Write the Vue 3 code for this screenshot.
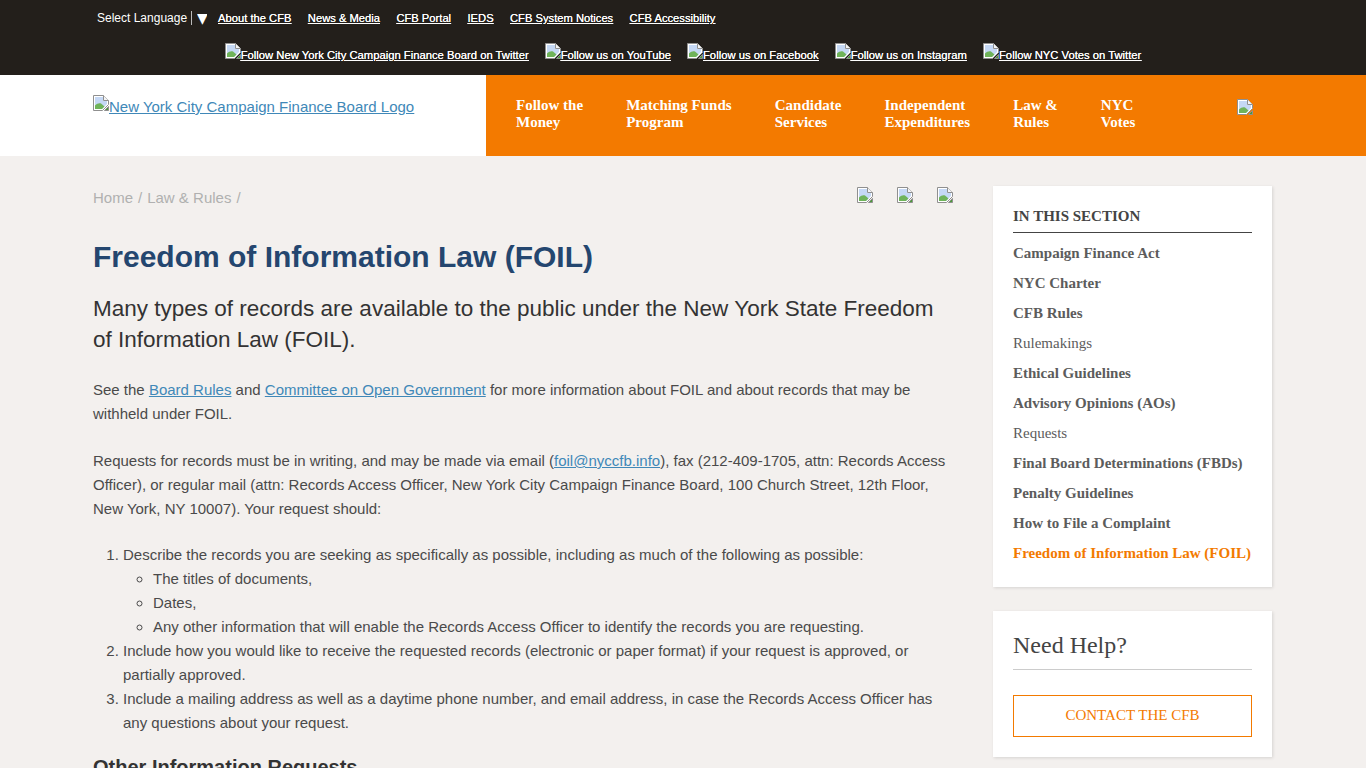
<script setup>
const topLinks = ['About the CFB', 'News & Media', 'CFB Portal', 'IEDS', 'CFB System Notices', 'CFB Accessibility']
const socials = [
  'Follow New York City Campaign Finance Board on Twitter',
  'Follow us on YouTube',
  'Follow us on Facebook',
  'Follow us on Instagram',
  'Follow NYC Votes on Twitter'
]
const navItems = [
  ['Follow the', 'Money'],
  ['Matching Funds', 'Program'],
  ['Candidate', 'Services'],
  ['Independent', 'Expenditures'],
  ['Law &', 'Rules'],
  ['NYC', 'Votes']
]
const sideItems = [
  { t: 'Campaign Finance Act', b: true },
  { t: 'NYC Charter', b: true },
  { t: 'CFB Rules', b: true },
  { t: 'Rulemakings', b: false },
  { t: 'Ethical Guidelines', b: true },
  { t: 'Advisory Opinions (AOs)', b: true },
  { t: 'Requests', b: false },
  { t: 'Final Board Determinations (FBDs)', b: true },
  { t: 'Penalty Guidelines', b: true },
  { t: 'How to File a Complaint', b: true },
  { t: 'Freedom of Information Law (FOIL)', b: true, active: true }
]
</script>

<template>
  <div class="page">
    <svg class="defs" width="0" height="0" aria-hidden="true">
      <symbol id="broken" viewBox="0 0 16 16">
        <path d="M.5.5H10.5L15.5 5.5V9.5L9.5 15.5H.5Z" fill="#fff" stroke="#8f8f8f" />
        <path d="M2 2H10V6H14V9L9 14H2Z" fill="#c5d8f5" />
        <path d="M10.5.5V5.5H15.5" fill="#f4f4f4" stroke="#8f8f8f" />
        <path d="M2 14V10.5C4 8.5 6 8 8 8.5L11.5 11.5L9 14Z" fill="#6fb35a" />
        <path d="M15.5 11.5V15.5H11.5Z" fill="#4c9a3a" stroke="#8f8f8f" />
      </symbol>
    </svg>

    <div class="topbar">
      <div class="toprow">
        <span class="lang">Select Language</span>
        <span class="caret">▼</span>
        <a v-for="l in topLinks" :key="l" class="toplink" href="#">{{ l }}</a>
      </div>
      <div class="socialrow">
        <a v-for="s in socials" :key="s" class="social" href="#">
          <svg class="bk bk-social"><use href="#broken" /></svg><span class="u">{{ s }}</span>
        </a>
      </div>
    </div>

    <header class="header">
      <div class="logo">
        <a href="#" class="logolink">
          <svg class="bk bk-logo"><use href="#broken" /></svg><span class="u">New York City Campaign Finance Board Logo</span>
        </a>
      </div>
      <nav class="nav">
        <a v-for="n in navItems" :key="n[0]" class="navitem" href="#">{{ n[0] }}<br />{{ n[1] }}</a>
        <svg class="bk nav-search"><use href="#broken" /></svg>
      </nav>
    </header>

    <div class="content">
      <main class="main">
        <div class="crumbrow">
          <div class="crumbs"><span>Home</span><span>/</span><span>Law &amp; Rules</span><span>/</span></div>
          <div class="share">
            <svg class="bk"><use href="#broken" /></svg>
            <svg class="bk"><use href="#broken" /></svg>
            <svg class="bk"><use href="#broken" /></svg>
          </div>
        </div>
        <h1 class="title">Freedom of Information Law (FOIL)</h1>
        <p class="lead">Many types of records are available to the public under the New York State Freedom of Information Law (FOIL).</p>
        <p class="para">See the <a href="#">Board Rules</a> and <a href="#">Committee on Open Government</a> for more information about FOIL and about records that may be withheld under FOIL.</p>
        <p class="para">Requests for records must be in writing, and may be made via email (<a href="#">foil@nyccfb.info</a>), fax (212-409-1705, attn: Records Access Officer), or regular mail (attn: Records Access Officer, New York City Campaign Finance Board, 100 Church Street, 12th Floor, New York, NY 10007). Your request should:</p>
        <ol class="olist">
          <li>Describe the records you are seeking as specifically as possible, including as much of the following as possible:
            <ul class="ulist">
              <li>The titles of documents,</li>
              <li>Dates,</li>
              <li>Any other information that will enable the Records Access Officer to identify the records you are requesting.</li>
            </ul>
          </li>
          <li>Include how you would like to receive the requested records (electronic or paper format) if your request is approved, or partially approved.</li>
          <li>Include a mailing address as well as a daytime phone number, and email address, in case the Records Access Officer has any questions about your request.</li>
        </ol>
        <h2 class="subhead">Other Information Requests</h2>
      </main>

      <aside class="side">
        <section class="card card-menu">
          <div class="sidetitle">IN THIS SECTION</div>
          <a
            v-for="i in sideItems"
            :key="i.t"
            href="#"
            class="sideitem"
            :class="{ bold: i.b, active: i.active }"
          >{{ i.t }}</a>
        </section>
        <section class="card card-help">
          <div class="helptitle">Need Help?</div>
          <a href="#" class="helpbtn">CONTACT THE CFB</a>
        </section>
      </aside>
    </div>
  </div>
</template>

<style>
html, body { margin: 0; height: 768px; overflow: hidden; }
</style>

<style scoped>
.page {
  height: 768px;
  overflow: hidden;
  background: #f3f0ee;
  font-family: "Liberation Sans", Arial, sans-serif;
  color: #444;
}
.defs { position: absolute; }
.bk { width: 16px; height: 16px; display: inline-block; flex: none; }
a { color: #4088b8; }
.u { text-decoration: underline; }

.topbar { height: 75px; background: #231f1b; color: #fff; box-sizing: border-box; }
.toprow {
  height: 36px;
  padding-left: 97px;
  display: flex;
  align-items: center;
  font-size: 11.2px;
}
.lang { font-size: 12px; padding-right: 4px; border-right: 1px solid #bbb; line-height: 14px; }
.caret { font-size: 14px; margin: 0 11px 0 5px; line-height: 14px; font-family: "DejaVu Sans", sans-serif; width: 10px; overflow: hidden; }
.toplink { color: #fff; margin-right: 16.4px; text-decoration: underline; font-size: 11.2px; text-shadow: 0 0 .5px #fff; }
.socialrow {
  display: flex;
  justify-content: center;
  gap: 16px;
  height: 39px;
  padding-top: 7px;
  box-sizing: border-box;
}
.social { color: #fff; font-size: 11.26px; line-height: 16px; display: flex; align-items: flex-end; height: 20px; text-shadow: 0 0 .5px #fff; }
.bk-social { align-self: flex-start; }

.header { display: flex; height: 81px; }
.logo { width: 486px; box-sizing: border-box; background: #fff; padding: 20px 0 0 93px; }
.logolink { display: flex; align-items: flex-end; font-size: 15px; line-height: 17px; height: 20px; }
.bk-logo { align-self: flex-start; }
.nav {
  flex: 1;
  background: #f37a00;
  display: flex;
  align-items: flex-start;
  padding: 22px 0 0 30px;
  gap: 43.1px;
}
.navitem {
  color: #fff;
  font-family: "Liberation Serif", "Times New Roman", serif;
  font-weight: 700;
  font-size: 15px;
  line-height: 17px;
  text-decoration: none;
}
.nav-search { margin-left: auto; margin-right: 113px; margin-top: 2px; }

.content { display: flex; padding: 30px 94px 0 93px; gap: 40px; }
.main { width: 860px; flex: none; }
.crumbrow { display: flex; justify-content: space-between; height: 24px; align-items: flex-start; }
.crumbs { display: flex; gap: 5px; color: #b0b0b0; font-size: 15px; line-height: 24px; }
.share { display: flex; gap: 24px; }
.share .bk { margin-top: 1px; }
.title {
  margin: 28px 0 0;
  font-size: 30px;
  line-height: 38px;
  font-weight: 700;
  color: #24466f;
}
.lead { margin: 17px 0 0; font-size: 22.5px; line-height: 31px; color: #333; }
.para { margin: 23px 0 0; font-size: 15px; line-height: 24px; color: #4a4a4a; }
.olist { margin: 22px 0 0; padding: 0 0 0 30px; font-size: 15px; line-height: 24px; color: #4a4a4a; }
.ulist { margin: 0; padding: 0 0 0 30px; list-style: circle; }
.subhead { margin: 20px 0 0; font-size: 20px; line-height: 24px; font-weight: 700; color: #333; }

.side { width: 279px; flex: none; display: flex; flex-direction: column; gap: 24px; font-family: "Liberation Serif", "Times New Roman", serif; }
.card { background: #fff; box-shadow: 1px 1px 3px rgba(0,0,0,.12); box-sizing: border-box; padding: 0 20px; }
.card-menu { height: 401px; padding-top: 21px; }
.sidetitle { font-size: 15px; line-height: 18px; font-weight: 700; color: #444; padding-bottom: 7px; border-bottom: 1px solid #444; margin-bottom: 5px; }
.sideitem { display: block; font-size: 15px; line-height: 30px; color: #5c5c5c; text-decoration: none; white-space: nowrap; }
.sideitem.bold { font-weight: 700; }
.sideitem.active { color: #f37a00; }
.card-help { height: 146px; padding-top: 19px; }
.helptitle { font-size: 24px; line-height: 30px; color: #444; padding-bottom: 9px; border-bottom: 1px solid #ccc; }
.helpbtn {
  display: block;
  margin-top: 25px;
  height: 42px;
  line-height: 38px;
  box-sizing: border-box;
  border: 1px solid #f37a00;
  color: #f37a00;
  font-size: 15px;
  text-align: center;
  text-decoration: none;
}
</style>
